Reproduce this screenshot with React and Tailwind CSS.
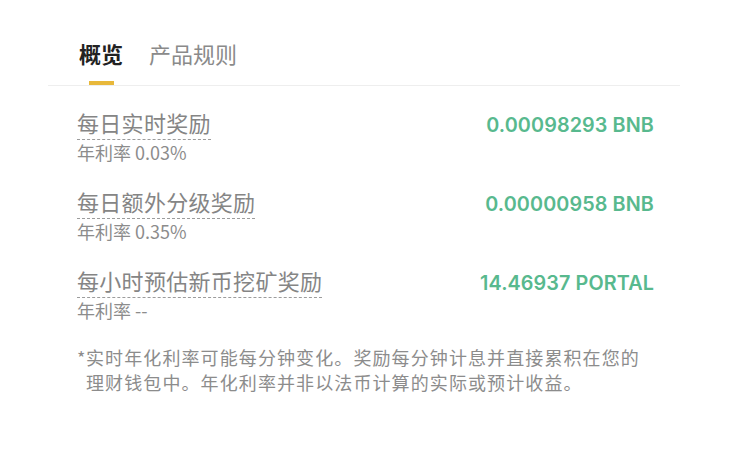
import React from 'react';

const rows = [
  { label: '每日实时奖励', rate: '年利率 0.03%', value: '0.00098293 BNB' },
  { label: '每日额外分级奖励', rate: '年利率 0.35%', value: '0.00000958 BNB' },
  { label: '每小时预估新币挖矿奖励', rate: '年利率 --', value: '14.46937 PORTAL' },
];

const cjk = "font-['Noto_Sans_CJK_SC',sans-serif]";

const RewardRow = ({ label, rate, value }) => (
  <div className="flex items-start justify-between">
    <div className="flex flex-col items-start">
      <span className="border-b border-dashed border-[#9c9c9c] pb-[2px] text-[22px] leading-[30px] tracking-[0.3px] text-[#858585]">
        {label}
      </span>
      <span className="text-[18px] leading-[24px] text-[#8c8c8c]">{rate}</span>
    </div>
    <span className="mt-[4px] font-['Inter',sans-serif] text-[19.8px] font-semibold leading-[28px] tracking-[0.1px] text-[#58b98e]">
      {value}
    </span>
  </div>
);

export default function App() {
  return (
    <div className={`h-[475px] w-[750px] overflow-hidden bg-white ${cjk}`}>
      <div className="ml-[48px] w-[632px] pt-[37px]">
        {/* Tabs */}
        <div className="flex gap-[26px] border-b border-[#eeeeee] pl-[31px]">
          <div className="flex flex-col items-center">
            <span className="text-[22px] font-bold leading-[32px] text-[#222222]">概览</span>
            <span className="mt-[12px] h-[4px] w-[25px] bg-[#e8b83a]" />
          </div>
          <div className="flex flex-col items-center">
            <span className="text-[22px] leading-[32px] text-[#8a8a8a]">产品规则</span>
          </div>
        </div>

        {/* Rewards */}
        <div className="flex flex-col gap-[22px] pl-[29px] pr-[26px] pt-[21px]">
          {rows.map((r) => (
            <RewardRow key={r.label} {...r} />
          ))}
        </div>

        {/* Footnote */}
        <div className="mt-[23px] flex pl-[29px] pr-[26px] text-[18px] leading-[25px] text-[#8c8c8c]">
          <span className="w-[9px] shrink-0">*</span>
          <p className="tracking-[1.1px]">
            实时年化利率可能每分钟变化。奖励每分钟计息并直接累积在您的理财钱包中。年化利率并非以法币计算的实际或预计收益。
          </p>
        </div>
      </div>
    </div>
  );
}
